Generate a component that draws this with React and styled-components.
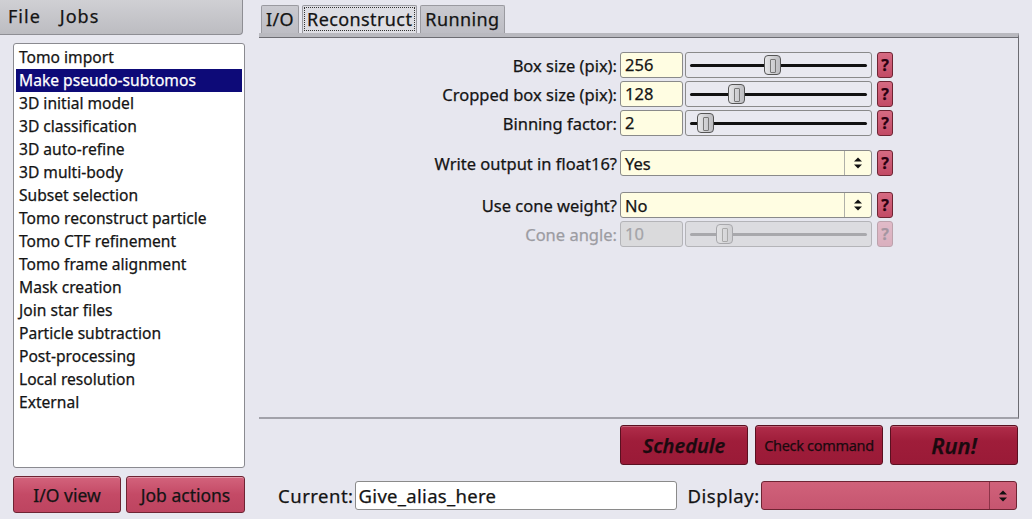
import React from 'react'
import styled, { createGlobalStyle } from 'styled-components'

const GlobalStyle = createGlobalStyle`
  html, body { margin: 0; padding: 0; background: #e7e7ef; }
  * { box-sizing: border-box; }
`

const jobs = [
  'Tomo import', 'Make pseudo-subtomos', '3D initial model', '3D classification',
  '3D auto-refine', '3D multi-body', 'Subset selection', 'Tomo reconstruct particle',
  'Tomo CTF refinement', 'Tomo frame alignment', 'Mask creation', 'Join star files',
  'Particle subtraction', 'Post-processing', 'Local resolution', 'External',
]

const App = () => {
  return (
    <Window>
      <GlobalStyle />
      <LeftCol>
        <MenuBar>
          <MenuItem>File</MenuItem>
          <MenuItem>Jobs</MenuItem>
        </MenuBar>
        <JobList>
          {jobs.map((j, i) => (
            <JobItem key={j} $selected={i === 1}>{j}</JobItem>
          ))}
        </JobList>
        <LeftButtons>
          <PinkButton $w={108}>I/O view</PinkButton>
          <PinkButton $w={119}>Job actions</PinkButton>
        </LeftButtons>
      </LeftCol>

      <RightCol>
        <TabBar>
          <Tab>I/O</Tab>
          <Tab $active>Reconstruct</Tab>
          <Tab>Running</Tab>
        </TabBar>
        <TabPanel>
          <Form>
            <SliderRow label="Box size (pix):" value="256" thumb={78} />
            <SliderRow label="Cropped box size (pix):" value="128" thumb={42} />
            <SliderRow label="Binning factor:" value="2" thumb={11} />
            <Spacer $h={8} />
            <ChoiceRow label="Write output in float16?" value="Yes" />
            <Spacer $h={10} />
            <ChoiceRow label="Use cone weight?" value="No" />
            <SliderRow label="Cone angle:" value="10" thumb={30} disabled />
          </Form>
        </TabPanel>
        <ActionRow>
          <ActionButton $italic $size={20}>Schedule</ActionButton>
          <ActionButton $size={14.5} $tight>Check command</ActionButton>
          <ActionButton $italic $size={22}>Run!</ActionButton>
        </ActionRow>
        <BottomRow>
          <BottomLabel>Current:</BottomLabel>
          <AliasInput>Give_alias_here</AliasInput>
          <BottomLabel>Display:</BottomLabel>
          <DisplayChoice>
            <ChoiceArrows $pink />
          </DisplayChoice>
        </BottomRow>
      </RightCol>
    </Window>
  )
}

const SliderRow = ({ label, value, thumb, disabled }) => (
  <Row>
    <Label $disabled={disabled}>{label}</Label>
    <ValueInput $disabled={disabled}>{value}</ValueInput>
    <Slider $disabled={disabled}>
      <Track $disabled={disabled} />
      <Thumb $disabled={disabled} style={{ left: `${thumb}px` }} />
    </Slider>
    <HelpButton $disabled={disabled}>?</HelpButton>
  </Row>
)

const ChoiceRow = ({ label, value }) => (
  <Row>
    <Label>{label}</Label>
    <Choice>
      <span>{value}</span>
      <ChoiceArrows />
    </Choice>
    <HelpButton>?</HelpButton>
  </Row>
)

const ChoiceArrows = ({ $pink }) => (
  <ArrowBox $pink={$pink}>
    <svg width="10" height="14" viewBox="0 0 10 14">
      <path d="M1 5.5 L5 1.5 L9 5.5 Z" fill="#111" />
      <path d="M1 8.5 L5 12.5 L9 8.5 Z" fill="#111" />
    </svg>
  </ArrowBox>
)

const Window = styled.div`
  width: 1032px;
  height: 519px;
  display: flex;
  background: #e7e7ef;
  font-family: "Noto Sans", "DejaVu Sans", sans-serif;
  color: #141414;
  -webkit-text-stroke: 0.25px currentColor;
  overflow: hidden;
`

const LeftCol = styled.div`
  width: 246px;
  display: flex;
  flex-direction: column;
`

const MenuBar = styled.div`
  width: 243px;
  height: 35px;
  display: flex;
  align-items: center;
  gap: 19px;
  padding: 0 0 2px 8px;
  background: linear-gradient(#d0d0d4, #bcbcc1);
  border-right: 1px solid #8e8e94;
  border-bottom: 1px solid #8e8e94;
  border-bottom-right-radius: 4px;
`

const MenuItem = styled.span`
  font-size: 18px;
  letter-spacing: 1px;
`

const JobList = styled.div`
  margin: 8px 0 0 13px;
  width: 232px;
  height: 425px;
  background: #fff;
  border: 1px solid #8a8a90;
  border-radius: 3px;
  padding: 2px 2px;
`

const JobItem = styled.div`
  height: 23px;
  line-height: 23px;
  padding-left: 3px;
  font-size: 15.6px;
  white-space: nowrap;
  background: ${p => (p.$selected ? '#0d0a78' : 'transparent')};
  color: ${p => (p.$selected ? '#fff' : '#141414')};
`

const LeftButtons = styled.div`
  display: flex;
  gap: 5px;
  margin: 8px 0 0 13px;
`

const PinkButton = styled.div`
  width: ${p => p.$w}px;
  height: 37px;
  display: flex;
  align-items: center;
  justify-content: center;
  font-size: 17.5px;
  background: linear-gradient(#d3637c, #c44a66 50%, #bd4460);
  border: 1px solid #6e2433;
  border-radius: 3px;
  box-shadow: inset 0 1px 0 rgba(255, 255, 255, 0.35);
`

const RightCol = styled.div`
  flex: 1;
  display: flex;
  flex-direction: column;
  margin-left: 13px;
  width: 760px;
`

const TabBar = styled.div`
  height: 33px;
  display: flex;
  align-items: flex-end;
  gap: 3px;
  padding-left: 2px;
`

const Tab = styled.div`
  height: 28px;
  padding: 0 4px 1px;
  display: flex;
  align-items: center;
  font-size: 18px;
  letter-spacing: 0.4px;
  background: ${p => (p.$active ? '#dedee4' : 'linear-gradient(#cacad0, #bdbdc4)')};
  border: 1px solid #9a9aa0;
  border-bottom: none;
  border-radius: 2px 2px 0 0;
  outline: ${p => (p.$active ? '1px dotted #333' : 'none')};
  outline-offset: -3px;
`

const TabPanel = styled.div`
  width: 760px;
  height: 386px;
  border-top: 4px solid #b9b9bf;
  border-right: 1px solid #6c6c72;
  border-bottom: 2px solid #a2a2aa;
  box-shadow: inset 0 1px 0 #6c6c72;
  padding-top: 15px;
`

const Form = styled.div`
  display: flex;
  flex-direction: column;
  gap: 3px;
`

const Spacer = styled.div`
  height: ${p => p.$h}px;
`

const Row = styled.div`
  display: flex;
  align-items: center;
  height: 26px;
`

const Label = styled.div`
  width: 361px;
  text-align: right;
  padding-right: 3px;
  font-size: 16.5px;
  white-space: nowrap;
  color: ${p => (p.$disabled ? '#9c9ca2' : '#141414')};
`

const fieldBox = `
  height: 26px;
  background: #fffde2;
  border: 1px solid #8a8a8a;
  border-radius: 3px;
  font-size: 16.5px;
`

const ValueInput = styled.div`
  ${fieldBox}
  width: 63px;
  padding-left: 4px;
  line-height: 24px;
  background: ${p => (p.$disabled ? '#dadadc' : '#fffde2')};
  border-color: ${p => (p.$disabled ? '#b4b4b8' : '#8a8a8a')};
  color: ${p => (p.$disabled ? '#a4a4a8' : '#141414')};
`

const Slider = styled.div`
  position: relative;
  width: 187px;
  height: 26px;
  margin-left: 2px;
  border: 1px solid ${p => (p.$disabled ? '#b4b4b8' : '#8a8a8a')};
  border-radius: 3px;
  background: ${p => (p.$disabled ? '#dcdce0' : '#e9e9f0')};
`

const Track = styled.div`
  position: absolute;
  left: 4px;
  right: 4px;
  top: 11px;
  height: 3px;
  background: ${p => (p.$disabled ? '#a8a8ac' : '#111')};
  border-radius: 2px;
`

const Thumb = styled.div`
  position: absolute;
  top: 2px;
  width: 17px;
  height: 20px;
  border: 1px solid ${p => (p.$disabled ? '#a8a8ac' : '#555')};
  border-radius: 4px;
  background: ${p => (p.$disabled ? 'linear-gradient(90deg, #e2e2e4, #cfcfd2)' : 'linear-gradient(90deg, #e6e6e8, #bcbcc0)')};
  &::after {
    content: '';
    position: absolute;
    left: 5px;
    top: 3px;
    width: 4px;
    height: 12px;
    border: 1px solid ${p => (p.$disabled ? '#aaa' : '#777')};
    border-radius: 1px;
  }
`

const HelpButton = styled.div`
  width: 16px;
  height: 26px;
  margin-left: 5px;
  display: flex;
  align-items: center;
  justify-content: center;
  font-size: 16px;
  font-weight: 700;
  color: #2a0010;
  background: linear-gradient(#d66a82, #c24a65);
  border: 1px solid #6e2433;
  border-radius: 3px;
  opacity: ${p => (p.$disabled ? 0.35 : 1)};
`

const Choice = styled.div`
  ${fieldBox}
  width: 252px;
  display: flex;
  align-items: center;
  justify-content: space-between;
  padding-left: 4px;
`

const ArrowBox = styled.div`
  width: 27px;
  height: 100%;
  display: flex;
  align-items: center;
  justify-content: center;
  border-left: 1px solid ${p => (p.$pink ? '#8c3348' : '#b0b0a8')};
`

const ActionRow = styled.div`
  display: flex;
  gap: 7px;
  justify-content: flex-end;
  width: 759px;
  margin-top: 6px;
`

const ActionButton = styled.div`
  width: 128px;
  height: 40px;
  display: flex;
  align-items: center;
  justify-content: center;
  font-size: ${p => p.$size}px;
  font-style: ${p => (p.$italic ? 'italic' : 'normal')};
  font-weight: ${p => (p.$italic ? 600 : 400)};
  letter-spacing: ${p => (p.$tight ? '-0.3px' : '0')};
  color: #1a0a0f;
  background: linear-gradient(#b02d4a, #9f1d3a 40%, #9a1a37);
  border: 1px solid #5a1020;
  border-radius: 3px;
  box-shadow: inset 0 1px 0 rgba(255, 255, 255, 0.25);
`

const BottomRow = styled.div`
  display: flex;
  align-items: center;
  height: 29px;
  margin-top: 16px;
  padding-left: 19px;
`

const BottomLabel = styled.div`
  font-size: 18.5px;
  letter-spacing: 0.5px;
  margin-right: 1px;
`

const AliasInput = styled.div`
  width: 322px;
  height: 29px;
  line-height: 27px;
  padding-left: 3px;
  margin-right: 11px;
  font-size: 18.5px;
  letter-spacing: 0.3px;
  background: #fff;
  border: 1px solid #8a8a8a;
  border-radius: 3px;
`

const DisplayChoice = styled.div`
  width: 256px;
  height: 29px;
  display: flex;
  justify-content: flex-end;
  background: linear-gradient(#d0627a, #c65570);
  border: 1px solid #6e2433;
  border-radius: 3px;
`

export default App
